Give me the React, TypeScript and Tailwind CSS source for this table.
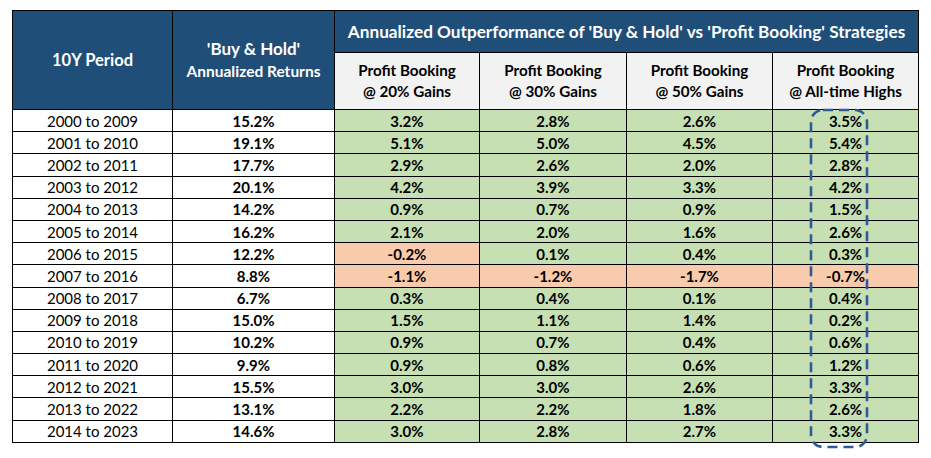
import React from "react";

const rows: [string, string, string[], boolean[]][] = [
  ["2000 to 2009", "15.2%", ["3.2%", "2.8%", "2.6%", "3.5%"], [false, false, false, false]],
  ["2001 to 2010", "19.1%", ["5.1%", "5.0%", "4.5%", "5.4%"], [false, false, false, false]],
  ["2002 to 2011", "17.7%", ["2.9%", "2.6%", "2.0%", "2.8%"], [false, false, false, false]],
  ["2003 to 2012", "20.1%", ["4.2%", "3.9%", "3.3%", "4.2%"], [false, false, false, false]],
  ["2004 to 2013", "14.2%", ["0.9%", "0.7%", "0.9%", "1.5%"], [false, false, false, false]],
  ["2005 to 2014", "16.2%", ["2.1%", "2.0%", "1.6%", "2.6%"], [false, false, false, false]],
  ["2006 to 2015", "12.2%", ["-0.2%", "0.1%", "0.4%", "0.3%"], [true, false, false, false]],
  ["2007 to 2016", "8.8%", ["-1.1%", "-1.2%", "-1.7%", "-0.7%"], [true, true, true, true]],
  ["2008 to 2017", "6.7%", ["0.3%", "0.4%", "0.1%", "0.4%"], [false, false, false, false]],
  ["2009 to 2018", "15.0%", ["1.5%", "1.1%", "1.4%", "0.2%"], [false, false, false, false]],
  ["2010 to 2019", "10.2%", ["0.9%", "0.7%", "0.4%", "0.6%"], [false, false, false, false]],
  ["2011 to 2020", "9.9%", ["0.9%", "0.8%", "0.6%", "1.2%"], [false, false, false, false]],
  ["2012 to 2021", "15.5%", ["3.0%", "3.0%", "2.6%", "3.3%"], [false, false, false, false]],
  ["2013 to 2022", "13.1%", ["2.2%", "2.2%", "1.8%", "2.6%"], [false, false, false, false]],
  ["2014 to 2023", "14.6%", ["3.0%", "2.8%", "2.7%", "3.3%"], [false, false, false, false]],
];

const subHeads: [string, string][] = [
  ["Profit Booking", "@ 20% Gains"],
  ["Profit Booking", "@ 30% Gains"],
  ["Profit Booking", "@ 50% Gains"],
  ["Profit Booking", "@ All-time Highs"],
];

export default function App() {
  return (
    <div
      className="w-[931px] h-[458px] bg-white pt-[10px] pl-[12px]"
      style={{ fontFamily: "Lato, 'Open Sans', sans-serif" }}
    >
      <div className="relative w-[906px]">
        <table className="border-collapse table-fixed w-[906px] text-black border border-[#555]">
          <colgroup>
            <col className="w-[160px]" />
            <col className="w-[162px]" />
            <col className="w-[145px]" />
            <col className="w-[147px]" />
            <col className="w-[146px]" />
            <col className="w-[146px]" />
          </colgroup>
          <thead>
            <tr className="h-[42px]">
              <th
                rowSpan={2}
                className="bg-[#1f4e79] text-white text-[16.5px] font-bold border border-black"
              >
                10Y Period
              </th>
              <th
                rowSpan={2}
                className="bg-[#1f4e79] text-white font-bold border border-black leading-[23px]"
              >
                <div className="text-[17px]">'Buy &amp; Hold'</div>
                <div className="text-[15.5px]">Annualized Returns</div>
              </th>
              <th
                colSpan={4}
                className="bg-[#1f4e79] text-white text-[17.2px] font-bold border border-black"
              >
                Annualized Outperformance of 'Buy &amp; Hold' vs 'Profit Booking' Strategies
              </th>
            </tr>
            <tr className="h-[57px]">
              {subHeads.map((s, i) => (
                <th
                  key={i}
                  className="bg-[#f2f2f2] text-[15.2px] font-bold border border-black leading-[21px] text-black"
                >
                  <div>{s[0]}</div>
                  <div>{s[1]}</div>
                </th>
              ))}
            </tr>
          </thead>
          <tbody>
            {rows.map((r, i) => (
              <tr key={i} className="h-[22.2px]">
                <td className="bg-white text-center text-[15px] border border-black p-0 leading-[20px]">
                  {r[0]}
                </td>
                <td className="bg-white text-center text-[15px] font-bold border border-black p-0 leading-[20px]">
                  {r[1]}
                </td>
                {r[2].map((v, j) => (
                  <td
                    key={j}
                    className={
                      "text-center text-[15px] font-bold border border-black p-0 leading-[20px] " +
                      (r[3][j] ? "bg-[#f8cbad]" : "bg-[#c6e0b4]")
                    }
                  >
                    {v}
                  </td>
                ))}
              </tr>
            ))}
          </tbody>
        </table>
        <svg
          className="absolute left-[797px] top-[98px] pointer-events-none"
          width="62"
          height="342"
          viewBox="0 0 62 342"
        >
          <rect
            x="2"
            y="2"
            width="56"
            height="337"
            rx="12"
            ry="12"
            fill="none"
            stroke="#2e5a96"
            strokeWidth="2.6"
            strokeDasharray="10 6"
          />
        </svg>
      </div>
    </div>
  );
}
